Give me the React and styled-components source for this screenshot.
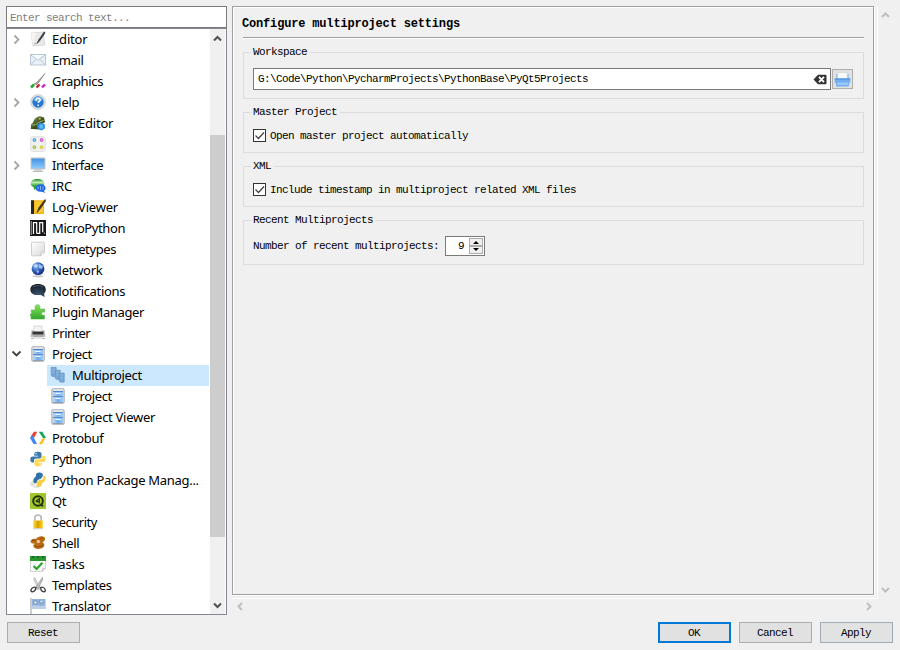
import React from "react";
import styled, { createGlobalStyle, css } from "styled-components";

const GlobalStyle = createGlobalStyle`
  * { box-sizing: border-box; }
  body { margin: 0; background: #f0f0f0; }
`;

const mono = css`
  font-family: "Liberation Mono", monospace;
  font-size: 11px;
  letter-spacing: -0.6px;
  line-height: 14px;
  white-space: pre;
  color: #000;
`;

const Dialog = styled.main`
  width: 900px;
  height: 650px;
  background: #f0f0f0;
  padding: 6px 7px 0 6px;
  overflow: hidden;
`;
const Body = styled.div`
  display: flex;
  height: 609px;
`;
const Sidebar = styled.aside`
  width: 221px;
  display: flex;
  flex-direction: column;
`;
const Search = styled.input`
  ${mono}
  width: 221px;
  height: 22px;
  border: 1px solid #7a7a7a;
  border-radius: 0;
  padding: 1px 3px 0;
  background: #fff;
  outline: none;
  &::placeholder { color: #808080; opacity: 1; }
`;
const Tree = styled.div`
  display: flex;
  height: 587px;
  border: 1px solid #828790;
  background: #fff;
`;
const Rows = styled.div`
  width: 203px;
  overflow: hidden;
`;
const Row = styled.div`
  display: flex;
  height: 21px;
  padding-left: ${(p) => (p.$child ? 40 : 3)}px;
`;
const Expander = styled.span`
  width: 20px;
  height: 21px;
  flex: none;
`;
const Item = styled.div`
  display: flex;
  width: ${(p) => (p.$child ? 162 : 179)}px;
  padding: 2px 0 0 ${(p) => (p.$child ? 3 : 0)}px;
  background: ${(p) => (p.$selected ? "#cce8ff" : "transparent")};
  svg { flex: none; }
`;
const Label = styled.span`
  margin-left: 6px;
  font: 13px/16px "Noto Sans", sans-serif;
  height: 16px;
  letter-spacing: ${(p) => p.$track}px;
  white-space: nowrap;
  color: #000;
`;
const ScrollTrack = styled.div`
  width: 15px;
  background: #f0f0f0;
  display: flex;
  flex-direction: column;
  justify-content: space-between;
`;
const ScrollThumb = styled.div`
  height: 402px;
  margin: 89px 0 auto;
  background: #cdcdcd;
`;
const ScrollArrow = styled.svg`
  display: block;
  width: 15px;
  height: 17px;
`;
const Content = styled.section`
  margin-left: 5px;
  width: 646px;
  height: 593px;
  border-right: 1px solid #fff;
  border-bottom: 1px solid #fff;
`;
const Frame = styled.div`
  width: 642px;
  height: 589px;
  border: 1px solid #a0a0a0;
  box-shadow: inset 1px 1px 0 #fff, 1px 1px 0 #fff;
  padding: 9px 9px 0 10px;
`;
const Title = styled.h1`
  ${mono}
  font-size: 12px;
  letter-spacing: -0.17px;
  font-weight: 700;
  margin: 0 0 0 -1px;
  height: 21px;
  line-height: 16px;
`;
const Rule = styled.div`
  height: 2px;
  border-top: 1px solid #a0a0a0;
  border-bottom: 1px solid #fff;
`;
const Group = styled.section`
  display: flex;
  flex-direction: column;
  height: ${(p) => p.$h}px;
  margin-top: 13px;
  border: 1px solid #dcdcdc;
`;
const Legend = styled.h2`
  ${mono}
  font-weight: 400;
  height: 14px;
  line-height: 15px;
  margin: -8px 0 0 7px;
  padding: 0 3px 0 2px;
  align-self: flex-start;
  background: #f0f0f0;
`;
const Line = styled.div`
  display: flex;
  align-items: center;
  padding-left: 9px;
  margin-top: ${(p) => p.$top}px;
`;
const Field = styled.div`
  ${mono}
  display: flex;
  align-items: center;
  justify-content: space-between;
  width: 578px;
  height: 22px;
  border: 1px solid #7a7a7a;
  background: #fff;
  padding: 0 3px 0 4px;
`;
const ToolButton = styled.button`
  width: 21px;
  height: 20px;
  margin-left: 1px;
  padding: 1px;
  border: 1px solid #adadad;
  background: #e1e1e1;
  svg { display: block; }
`;
const Check = styled.span`
  width: 13px;
  height: 13px;
  margin: 0 4px 1px 0;
  border: 1px solid #333;
  background: #fff;
  svg { display: block; }
`;
const Text = styled.span`
  ${mono}
`;
const Spin = styled.div`
  ${mono}
  display: flex;
  width: 40px;
  height: 20px;
  margin-left: 6px;
  border: 1px solid #7a7a7a;
  background: #fff;
  line-height: 18px;
`;
const SpinValue = styled.span`
  width: 23px;
  text-align: right;
  padding-right: 5px;
`;
const Steps = styled.div`
  display: flex;
  flex-direction: column;
  width: 14px;
  margin-top: 1px;
`;
const Step = styled.button`
  width: 14px;
  height: 8px;
  padding: 0;
  border: 1px solid #adadad;
  background: #f0f0f0;
  svg { display: block; }
`;
const ViewScroll = styled.div`
  width: 15px;
  height: 593px;
  display: flex;
  flex-direction: column;
  justify-content: space-between;
`;
const Right = styled.div`
  width: 666px;
`;
const RightTop = styled.div`
  display: flex;
`;
const HScroll = styled.div`
  display: flex;
  justify-content: space-between;
  width: 645px;
  margin-left: 5px;
  height: 16px;
`;
const Buttons = styled.footer`
  display: flex;
  align-items: flex-start;
  gap: 8px;
  padding: 7px 0 0 1px;
`;
const Button = styled.button`
  ${mono}
  width: 73px;
  height: 21px;
  padding: 1px 1px 0 0;
  background: ${(p) => (p.$tint ? "#e0e3e2" : "#e1e1e1")};
  border: ${(p) => (p.$primary ? "2px solid #0078d7" : p.$tint ? "1px solid #9eabb5" : "1px solid #adadad")};
  margin-right: ${(p) => (p.$gap ? "auto" : 0)};
  line-height: 16px;
`;

const Gradients = () => (
  <svg width="0" height="0" style={{ display: "block" }}>
    <defs>
      <linearGradient id="sky" x1="0" y1="0" x2="0" y2="1"><stop stopColor="#4394e4" /><stop offset="1" stopColor="#8ccbfa" /></linearGradient>
      <linearGradient id="paper" x1="0" y1="0" x2="1" y2="1"><stop stopColor="#fff" /><stop offset="1" stopColor="#d9d9d9" /></linearGradient>
      <linearGradient id="leaf" x1="0" y1="0" x2="0" y2="1"><stop stopColor="#8be45f" /><stop offset="1" stopColor="#30a42c" /></linearGradient>
      <linearGradient id="gold" x1="0" y1="0" x2="1" y2="0"><stop stopColor="#ffe43b" /><stop offset=".5" stopColor="#d99d00" /><stop offset="1" stopColor="#ffd51e" /></linearGradient>
      <linearGradient id="drawer" x1="0" y1="0" x2="1" y2="0"><stop stopColor="#b9dcff" /><stop offset=".5" stopColor="#69a9f1" /><stop offset="1" stopColor="#a5d0fd" /></linearGradient>
      <linearGradient id="reptile" x1="0" y1="0" x2="1" y2="1"><stop stopColor="#8fa05d" /><stop offset=".5" stopColor="#3f5722" /><stop offset="1" stopColor="#172812" /></linearGradient>
      <linearGradient id="bubble" x1="0" y1="0" x2="0" y2="1"><stop stopColor="#1f8a25" /><stop offset=".3" stopColor="#bdeeb0" /><stop offset=".6" stopColor="#35a93a" /><stop offset="1" stopColor="#2a9a31" /></linearGradient>
      <radialGradient id="globe" cx=".35" cy=".3" r=".75"><stop stopColor="#a6cdf9" /><stop offset=".45" stopColor="#376bc3" /><stop offset="1" stopColor="#12297a" /></radialGradient>
      <radialGradient id="night" cx=".5" cy=".9" r=".9"><stop stopColor="#3e5a73" /><stop offset="1" stopColor="#111922" /></radialGradient>
    </defs>
  </svg>
);

const cabinet = (
  <>
    <rect x="1.6" y=".5" width="12.8" height="15" rx="1.6" fill="#c9cdd2" stroke="#a9aeb6" strokeWidth=".7" />
    <rect x="3" y="1.4" width="10" height="1.4" fill="#ececec" />
    <rect x="3" y="3.5" width="10" height="4" fill="url(#drawer)" />
    <rect x="3" y="8.5" width="10" height="5.8" fill="url(#drawer)" />
    <path d="M3 3.5h10M3 8.4h10" stroke="#3d7fd0" strokeWidth=".9" />
    <path d="M5.5 5.4h5M5.5 10.3h5" stroke="#f7fbff" strokeWidth="1.3" />
    <path d="M3 14.5h10" stroke="#8a93a0" strokeWidth=".8" />
  </>
);

const pythonMark = (
  <>
    <path d="M7.7.8c-3 0-3.5 1.1-3.5 2.5v1.5h4v.7H2.6C1 5.5.3 6.8.3 8.5s.8 3 2.2 3H4V9.7C4 8.2 5 7.5 6.5 7.5h3.2c1.2 0 1.8-.8 1.8-2V3c0-1.5-1.2-2.2-3.8-2.2z" fill="#3c78aa" />
    <path d="M12.2 4.8h1.3c1.5 0 2.2 1.4 2.2 3.2s-.8 3.1-2.3 3.1H8.2v.7h3.8v1.4c0 1.4-1.3 2.1-3.7 2.1s-3.8-.8-3.8-2.3V10.2c0-1.2.7-2 2-2h3.3c1.5 0 2.4-.8 2.4-2.2z" fill="#ffda50" />
    <circle cx="6" cy="2.8" r=".7" fill="#fff" />
    <circle cx="10.2" cy="13.3" r=".7" fill="#fff" />
  </>
);

const ART = {
  editor: (
    <>
      <path d="M1 2l12-1 2 13-12 1z" fill="#e9e9e9" stroke="#d0d0d0" strokeWidth=".7" />
      <path d="M1 2l5-.5L3 15z" fill="#f7f4f1" />
      <path d="M14.3.8L9 8.5l-2 4 2.8-3L15 2z" fill="#333" stroke="#3a3a3a" strokeWidth=".8" />
      <path d="M4 13l3-1" stroke="#aaa" />
    </>
  ),
  email: (
    <>
      <rect x=".5" y="2.5" width="15" height="10.5" fill="#e8eff7" stroke="#b9c8d8" />
      <path d="M1 3l7 5.3L15 3M1 12.5l5-5M15 12.5l-5-5" fill="none" stroke="#a7bdd5" strokeWidth=".9" />
      <path d="M2 3h12L8 7.5z" fill="#f8fbfe" />
    </>
  ),
  graphics: (
    <>
      <path d="M15 .5L8 8l-2 2-2 1 3 .5 2-2.5z" fill="#aaa19b" stroke="#8c8681" strokeWidth=".7" />
      <path d="M1 14.5l3-3" stroke="#25ab32" strokeWidth="2.6" />
      <path d="M6.5 14.5l3-3" stroke="#cc1c36" strokeWidth="2.4" />
      <path d="M12 14.5l3-3" stroke="#c329cb" strokeWidth="2.4" />
    </>
  ),
  help: (
    <>
      <circle cx="8" cy="8" r="7.3" fill="#e2e4e6" stroke="#bfc2c5" strokeWidth=".8" />
      <circle cx="8" cy="8" r="5.7" fill="#2677cf" />
      <path d="M3 6a5.2 4.5 0 0110 0c-3 2-7 2-10 0z" fill="#65a9eb" />
      <path d="M6.2 6.4C6.2 4.8 7 4.3 8.1 4.3c1.2 0 2 .7 2 1.6 0 1.4-1.7 1.4-1.9 2.9M8.2 10.4v1.5" fill="none" stroke="#fff" strokeWidth="1.5" />
    </>
  ),
  hex: (
    <>
      <path d="M.8 14L1 9.5c1-1 2-1.5 2.5-3.5C4.5 3.5 7 1.5 10 1.3L14 2.5l1 4.5-3 2 1 5.5z" fill="url(#reptile)" />
      <path d="M1.5 10c3 .5 5-.5 7-2.5l5-2" stroke="#a5b478" fill="none" />
      <circle cx="9.8" cy="3.8" r="1" fill="#d0bc47" />
      <path d="M11 7.5l3.8 2v4L11 15.5 7.2 13V9.5z" fill="#2388e8" />
      <path d="M9.2 10l2-1 2 1v3l-2 1-2-1z" fill="#64b9f6" />
    </>
  ),
  icons: (
    <>
      <rect x=".7" y=".7" width="14.6" height="14.6" rx="2" fill="#f0f0ef" stroke="#dedede" />
      {[["#4faada", 4.4, 4], ["#c960ca", 11.6, 4], ["#9fc54b", 4.4, 11.2], ["#d9ce49", 11.6, 11.2]].map(([c, x, y]) => (
        <React.Fragment key={c}><circle cx={x} cy={y} r="1.9" fill={c} /><circle cx={x} cy={y} r=".7" fill="#fff8" /></React.Fragment>
      ))}
    </>
  ),
  monitor: (
    <>
      <path d="M5 12h6l2 3H3z" fill="#d4d4d2" />
      <rect x=".6" y=".6" width="14.8" height="11.8" rx=".8" fill="#bdc3c8" />
      <rect x="1.6" y="1.6" width="12.8" height="9.8" fill="url(#sky)" />
      <path d="M3 14.5h10" stroke="#bbb" />
    </>
  ),
  irc: (
    <>
      <path d="M7.5 1c4 0 6.8 2 6.8 4.6S11.5 10 7.5 10H6.5L4 12.3 3.8 9.4C1.8 8.6.6 7.3.6 5.6.6 3 3.5 1 7.5 1z" fill="url(#bubble)" />
      <path d="M10.5 6.2c3 0 5.1 1.6 5.1 3.8 0 1.2-.7 2.2-1.7 2.9l1.5 2.2-3.4-1.4h-1.5c-3 0-5-1.5-5-3.7s2-3.8 5-3.8z" fill="#2468dd" />
      <path d="M8 8.5v3M10.5 8v4M13 8.5v3" stroke="#7fb0f9" />
    </>
  ),
  log: (
    <>
      <rect x="1" y="1.3" width="13" height="13.7" rx=".5" fill="#f4b51b" />
      <path d="M1 1.3h3V15H1z" fill="#292823" />
      <path d="M5 2l8 1v10l-8 1z" fill="#f9c833" />
      <path d="M15 .5l-6 8-2 5 3.5-4L15.5 2z" fill="#453615" stroke="#3e3218" strokeWidth=".8" />
    </>
  ),
  micro: (
    <>
      <path d="M0 0h16v16H0z" fill="#171717" />
      <path d="M3.5 14V2.7h3.2V13.4M6.7 10V2.7M9.7 12.5V2.7h3v9.6M6.7 13.4h3V10" fill="none" stroke="#fff" strokeWidth="1.2" />
      <path d="M1.2 1v14M14.4 12.5v1.5" fill="none" stroke="#d8d8d8" strokeWidth=".8" />
    </>
  ),
  file: <path d="M2.5 1.2h11a1 1 0 011 1v9l-3.5 3.6H2.5a1 1 0 01-1-1V2.2a1 1 0 011-1zM14.5 11.2H11v3.6" fill="url(#paper)" stroke="#cacaca" strokeWidth=".9" />,
  network: (
    <>
      <ellipse cx="8" cy="14.3" rx="5.5" ry="1.1" fill="#c9c9c9" />
      <circle cx="8" cy="6.7" r="6.4" fill="url(#globe)" />
      <path d="M3 3l4-1 1 2-3 2zM9 2l4 2-1 3-3-1zM6 8l3 1-1 3z" fill="#c0dbfb" opacity=".75" />
    </>
  ),
  notify: (
    <>
      <path d="M8 .9c5 0 7.8 2.2 7.8 5.7 0 2-.8 3.5-1.8 4.3l.8 3-4-1.8H7.5C2.8 12.1.3 10.1.3 6.6S3 .9 8 .9z" fill="url(#night)" />
      <path d="M3 4.2c2-2 8-2 10 0" stroke="#54606c" fill="none" />
    </>
  ),
  plugin: <path d="M1 6h4.5L5 3.5C5 1.5 6.2.8 7.6.8S10 1.7 10 3.3L9.5 5H14.5v3.2c-2-.8-3 .2-3 1.4 0 1.3 1.2 2.1 3 1.5V15H1v-3C-.5 11.5.2 9 2 9.5z" fill="url(#leaf)" stroke="#4dbb45" strokeWidth=".6" />,
  printer: (
    <>
      <path d="M4 1h8v6H4z" fill="#f4f4f4" stroke="#c7c7c7" strokeWidth=".7" />
      <path d="M1.5 5h2v3h9V5h2l1 7h-15z" fill="#bdbdbd" />
      <path d="M2.5 6.5h11v3h-11z" fill="#353535" />
      <path d="M3 10h10v4H3z" fill="#e4e4e4" />
      <path d="M3 11h10" stroke="#747474" />
      <path d="M1 13.5h2.5M12.5 13.5H15" stroke="#aaa" />
    </>
  ),
  project: cabinet,
  multi: (
    <>
      {[0, 4, 8].map((d, i) => (
        <g key={d} transform={`translate(${0.8 + d} ${i * 2.8})`}>
          <path d="M.4.5h5v9h-4l-1-1z" fill="#76a9d7" stroke="#6c91b5" strokeWidth=".7" />
          <path d="M1.3 2.3h3.2M1.3 5h3.2" stroke="#8fbce6" />
        </g>
      ))}
    </>
  ),
  protobuf: (
    <>
      <path d="M3.8 1.8h3.5L4.6 7 2 7.8 1 6.3z" fill="#e94335" />
      <path d="M0 8l2-3 2 3 3 6H3.5z" fill="#4285f4" />
      <path d="M8.8 1.8h3.5L16 8h-3z" fill="#10a765" />
      <path d="M13 8l2 .5-3 5.7H8.8z" fill="#fbbd16" />
    </>
  ),
  python: pythonMark,
  package: (
    <>
      <path d="M0 11l3-3 3 1-2 6-3-1z" fill="#e1e1dc" />
      <path d="M10 .5C7 .3 6 1.5 6 3l-.5 2C3.7 6 3 7.7 3.5 9.7c.3 1.5 1.5 1.7 3 1.3.5-3 2-4 4-4l2-2c1-3 0-4.2-2.5-4.5z" fill="#3272aa" />
      <path d="M13.5 3.5c2 .2 2.5 2 2 4-.4 2-1.7 3-3.3 3.2l-.7 3c-1.5 1.8-4.7 1.8-5.3 0l.5-3C7.5 8.2 9 8 11 8c2 0 2.3-2 2.5-4.5z" fill="#f9cf44" />
      <path d="M4 15h5" stroke="#ccc" />
    </>
  ),
  qt: (
    <>
      <path d="M0 0h16v16H0z" fill="#9fc72e" />
      <circle cx="8" cy="8" r="4.8" fill="none" stroke="#27310d" strokeWidth="2" />
      <path d="M10.5 11l2.5 2.3" stroke="#27310d" strokeWidth="2" />
      <path d="M9.3 5v5.5M5.8 8.2l3.5-2.4M6 8.6h4" stroke="#27310d" strokeWidth="1.2" />
    </>
  ),
  lock: (
    <>
      <path d="M4.8 7V4c0-4 6.4-4 6.4 0v3" fill="none" stroke="#b8b8b8" strokeWidth="1.7" />
      <rect x="3.2" y="6.5" width="9.6" height="8" rx=".5" fill="url(#gold)" />
      <path d="M3 14.7h10" stroke="#d6d2c9" />
    </>
  ),
  shell: (
    <>
      <path d="M.5 6.5C1 4 3.5 3.3 6 4c2-3 6-3.5 8.2-2 1.8 1.5.8 4-1.7 5.3 2.8 1.7 2.4 4.7-.8 6-3.7 1.3-8 .4-8.4-2.3C3.2 9.8 4 9 6 8.6 3 9.2 1 8.2.5 6.5z" fill="#b96d12" />
      <path d="M2 5.6c2.5-.6 4 0 5 1.4M5 11c3 1.5 6 .8 8-1M9.5 4.5l3.5-2" fill="none" stroke="#80400b" strokeWidth=".8" />
      <circle cx="8.3" cy="6.5" r="1.8" fill="#edc39b" />
    </>
  ),
  tasks: (
    <>
      <path d="M.5 1h15v11.5l-3 3H.5z" fill="#f8f8f8" stroke="#bec5be" strokeWidth=".7" />
      <path d="M0 0h16v5H0z" fill="#29952f" />
      <path d="M2 1h2M7 1h2M12 1h2" stroke="#165c1d" strokeWidth="1.5" />
      <path d="M3.6 10l3 3L12.4 6.8" fill="none" stroke="#29a52d" strokeWidth="2.2" />
      <path d="M12.5 15.5v-3h3" fill="#ddd" stroke="#bbb" strokeWidth=".7" />
    </>
  ),
  scissors: (
    <>
      <path d="M4 .5l1 1 5.5 10-1.8 1L4 3z" fill="#e0e0e0" stroke="#999" strokeWidth=".6" />
      <path d="M12.5.5l-1 1-5.8 10 1.8 1L12.5 3z" fill="#c4c4c4" stroke="#888" strokeWidth=".6" />
      <path d="M6 10.5c-2-1-4 .2-5 2.5-.7 2 2 2.5 4 .5zM10.5 10.5c2-1 4 .2 4.8 2.5.5 2-2 2.5-4 .5z" fill="#fff" stroke="#393939" strokeWidth="1.3" />
    </>
  ),
  translator: (
    <>
      <path d="M1 0v16" stroke="#b6bdc4" strokeWidth="1.5" />
      <path d="M2 1h13.5v10H2z" fill="#8eb4df" />
      <path d="M2 8c4-3 7 2 13.5-1v4H2z" fill="#bbcfe7" />
      <path d="M4 3h3v3H4zM9 3h1v2h3V3" fill="#e2edf8" stroke="#55799f" strokeWidth=".6" />
    </>
  ),
};

const Icon = ({ name }) => <svg width="16" height="16" viewBox="0 0 16 16">{ART[name]}</svg>;

// label, icon, tracking, kind, selected
const ITEMS = [
  ["Editor", "editor", -0.17, ">"],
  ["Email", "email", -0.4],
  ["Graphics", "graphics", -0.32],
  ["Help", "help", -0.25, ">"],
  ["Hex Editor", "hex", -0.22],
  ["Icons", "icons", -0.3],
  ["Interface", "monitor", -0.44, ">"],
  ["IRC", "irc", -0.3],
  ["Log-Viewer", "log", -0.2],
  ["MicroPython", "micro", -0.4],
  ["Mimetypes", "file", -0.38],
  ["Network", "network", -0.25],
  ["Notifications", "notify", -0.32],
  ["Plugin Manager", "plugin", -0.36],
  ["Printer", "printer", -0.55],
  ["Project", "project", -0.36, "v"],
  ["Multiproject", "multi", -0.33, "child", true],
  ["Project", "project", -0.36, "child"],
  ["Project Viewer", "project", -0.28, "child"],
  ["Protobuf", "protobuf", -0.32],
  ["Python", "python", -0.62],
  ["Python Package Manag...", "package", -0.3],
  ["Qt", "qt", -0.5],
  ["Security", "lock", -0.48],
  ["Shell", "shell", -0.4],
  ["Tasks", "tasks", -0.05],
  ["Templates", "scissors", -0.33],
  ["Translator", "translator", -0.3],
];

const TreeRow = ({ item: [label, icon, track, kind, selected] }) => {
  const child = kind === "child";
  return (
    <Row $child={child}>
      {!child && (
        <Expander>
          {kind === ">" && <svg width="13" height="21"><path d="M4.5 6.5l4 4-4 4" fill="none" stroke="#a6a6a6" strokeWidth="1.8" /></svg>}
          {kind === "v" && <svg width="13" height="21"><path d="M2.5 7.5l4 4 4-4" fill="none" stroke="#404040" strokeWidth="1.8" /></svg>}
        </Expander>
      )}
      <Item $child={child} $selected={selected}>
        <Icon name={icon} />
        <Label $track={track}>{label}</Label>
      </Item>
    </Row>
  );
};

const Arrow = ({ d, light }) => (
  <ScrollArrow viewBox="0 0 15 17">
    <path d={d} fill="none" stroke={light ? "#bfbfbf" : "#505050"} strokeWidth="2" />
  </ScrollArrow>
);

const CheckLine = ({ children }) => (
  <Line $top={10}>
    <Check><svg width="11" height="11"><path d="M1.5 5.5l3 3 5.5-6" fill="none" stroke="#444" strokeWidth="1.3" /></svg></Check>
    <Text>{children}</Text>
  </Line>
);

export default function App() {
  return (
    <Dialog>
      <GlobalStyle />
      <Gradients />
      <Body>
        <Sidebar>
          <Search placeholder="Enter search text..." />
          <Tree>
            <Rows>{ITEMS.map((item, i) => <TreeRow key={i} item={item} />)}</Rows>
            <ScrollTrack>
              <Arrow d="M4 11.5L7.5 8 11 11.5" />
              <ScrollThumb />
              <Arrow d="M4 6.5L7.5 10 11 6.5" />
            </ScrollTrack>
          </Tree>
        </Sidebar>
        <Right>
          <RightTop>
            <Content>
              <Frame>
                <Title>Configure multiproject settings</Title>
                <Rule />
                <Group $h={47}>
                  <Legend>Workspace</Legend>
                  <Line $top={9}>
                    <Field>
                      <span>{"G:\\Code\\Python\\PycharmProjects\\PythonBase\\PyQt5Projects"}</span>
                      <svg width="14" height="11"><path d="M.5 5.5L5 .7h7.5a1 1 0 011 1v7.6a1 1 0 01-1 1H5z" fill="#333" /><path d="M6 2.8l5 5.4M11 2.8L6 8.2" stroke="#fff" strokeWidth="1.8" /></svg>
                    </Field>
                    <ToolButton aria-label="Browse">
                      <svg width="17" height="16">
                        <path d="M2 8V3h1.5v-1h10v1H15v5z" fill="#aac6e4" />
                        <path d="M3.8 1.5h9.4v6.5H3.8z" fill="#fafafa" stroke="#d0d4d9" strokeWidth=".7" />
                        <path d="M.7 7.5h15.6v4.3H15v2.7a1 1 0 01-1 1H3a1 1 0 01-1-1v-2.7H.7z" fill="#73adf0" />
                        <path d="M.7 8h15.6" stroke="#438de0" />
                        <path d="M3 11.5h11v2.5H3z" fill="#97c9fa" />
                      </svg>
                    </ToolButton>
                  </Line>
                </Group>
                <Group $h={41}>
                  <Legend>Master Project</Legend>
                  <CheckLine>Open master project automatically</CheckLine>
                </Group>
                <Group $h={41}>
                  <Legend>XML</Legend>
                  <CheckLine>Include timestamp in multiproject related XML files</CheckLine>
                </Group>
                <Group $h={45}>
                  <Legend>Recent Multiprojects</Legend>
                  <Line $top={9}>
                    <Text>Number of recent multiprojects:</Text>
                    <Spin>
                      <SpinValue>9</SpinValue>
                      <Steps>
                        <Step><svg width="12" height="6"><path d="M3 5h6L6 2z" /></svg></Step>
                        <Step><svg width="12" height="6"><path d="M3 1h6L6 4z" /></svg></Step>
                      </Steps>
                    </Spin>
                  </Line>
                </Group>
              </Frame>
            </Content>
            <ViewScroll>
              <Arrow light d="M4 11l3.5-3.5L11 11" />
              <Arrow light d="M4 6l3.5 3.5L11 6" />
            </ViewScroll>
          </RightTop>
          <HScroll>
            <Arrow light d="M10 4L6.5 7.5 10 11" />
            <Arrow light d="M5 4l3.5 3.5L5 11" />
          </HScroll>
        </Right>
      </Body>
      <Buttons>
        <Button $gap>Reset</Button>
        <Button $primary>OK</Button>
        <Button>Cancel</Button>
        <Button $tint>Apply</Button>
      </Buttons>
    </Dialog>
  );
}
